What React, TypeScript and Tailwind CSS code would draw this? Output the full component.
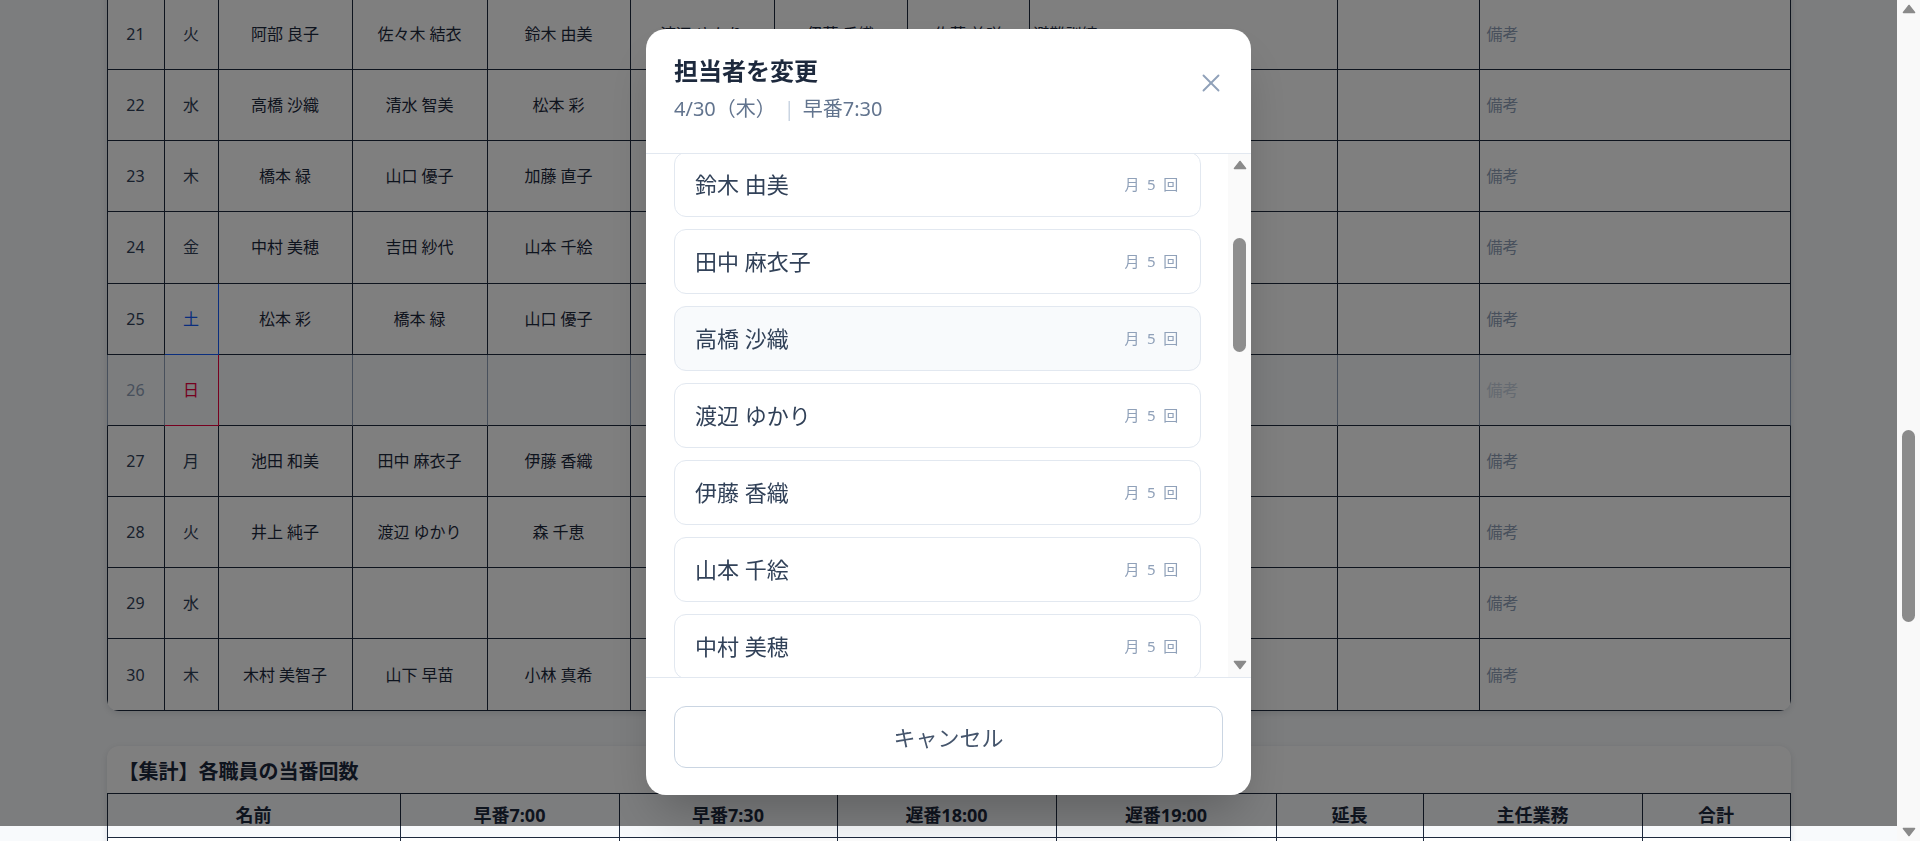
import React, { useLayoutEffect, useRef } from 'react';
import clsx from 'clsx';
import { X } from 'lucide-react';

const WEEK = ['日', '月', '火', '水', '木', '金', '土'];
const HOLIDAYS = [29];

const STAFF = [
  '佐藤 美咲', '阿部 良子', '佐々木 結衣', '清水 智美', '鈴木 由美', '田中 麻衣子', '高橋 沙織',
  '渡辺 ゆかり', '伊藤 香織', '山本 千絵', '中村 美穂', '小林 真希', '加藤 直子', '吉田 紗代',
  '山口 優子', '松本 彩', '井上 純子', '木村 美智子', '橋本 緑', '池田 和美', '山下 早苗',
  '森 千恵', '斎藤 由紀', '山田 恵', '岡田 舞', '石川 明日香', '前田 ひとみ', '藤田 知子',
];

const MONTH_COUNT = [4, 6, 5, 4, 5, 5, 5, 5, 5, 5, 5, 4, 5, 6, 4, 5, 5, 4, 6, 5, 4, 5, 4, 3, 4, 5, 4, 3];

const FIXED: Record<number, string[]> = {
  21: ['阿部 良子', '佐々木 結衣', '鈴木 由美', '渡辺 ゆかり', '伊藤 香織', '佐藤 美咲'],
  22: ['高橋 沙織', '清水 智美', '松本 彩', '山本 千絵', '加藤 直子', '中村 美穂'],
  23: ['橋本 緑', '山口 優子', '加藤 直子', '田中 麻衣子', '森 千恵', '佐藤 美咲'],
  24: ['中村 美穂', '吉田 紗代', '山本 千絵', '井上 純子', '小林 真希', '阿部 良子'],
  25: ['松本 彩', '橋本 緑', '山口 優子', '', '', ''],
  27: ['池田 和美', '田中 麻衣子', '伊藤 香織', '木村 美智子', '清水 智美', '佐藤 美咲'],
  28: ['井上 純子', '渡辺 ゆかり', '森 千恵', '高橋 沙織', '吉田 紗代', '阿部 良子'],
  30: ['木村 美智子', '山下 早苗', '小林 真希', '鈴木 由美', '池田 和美', '佐藤 美咲'],
};

type DayRow = { day: number; week: string; shifts: string[]; event: string };

const DAYS: DayRow[] = Array.from({ length: 30 }, (_, i) => {
  const day = i + 1;
  const week = WEEK[(day + 2) % 7];
  const off = week === '日' || HOLIDAYS.includes(day);
  const shifts = off
    ? ['', '', '', '', '', '']
    : FIXED[day] ?? Array.from({ length: 6 }, (_, c) => STAFF[(day * 5 + c * 7) % STAFF.length]);
  return { day, week, shifts, event: day === 21 ? '避難訓練' : day === 10 ? '職員会議' : '' };
});

const MAIN_HEAD = ['日付', '曜日', '早番7:00', '早番7:30', '遅番18:00', '遅番19:00', '延長', '主任業務', '行事・予定', '確認', '備考'];
const SUM_HEAD = ['名前', '早番7:00', '早番7:30', '遅番18:00', '遅番19:00', '延長', '主任業務', '合計'];

const SUMMARY = STAFF.map((name) => {
  const counts = [0, 1, 2, 3, 4, 5].map((c) => DAYS.filter((d) => d.shifts[c] === name).length);
  return { name, counts, total: counts.reduce((a, b) => a + b, 0) };
});

const Arrow = ({ down }: { down?: boolean }) => (
  <svg width="14" height="10" viewBox="0 0 14 10" className={down ? 'rotate-180' : undefined}>
    <path d="M7 1.5 12.5 8.5H1.5Z" fill="#8a8a8a" stroke="#8a8a8a" strokeWidth="1.6" strokeLinejoin="round" />
  </svg>
);

export default function App() {
  const pageRef = useRef<HTMLDivElement>(null);
  const anchorRowRef = useRef<HTMLTableRowElement>(null);
  const listRef = useRef<HTMLDivElement>(null);
  const anchorItemRef = useRef<HTMLLIElement>(null);

  // open on the last third of the month with the staff list near 鈴木
  useLayoutEffect(() => {
    const page = pageRef.current;
    const row = anchorRowRef.current;
    if (page && row) {
      page.scrollTop += row.getBoundingClientRect().top - page.getBoundingClientRect().top + 1;
    }
    const list = listRef.current;
    const item = anchorItemRef.current;
    if (list && item) {
      list.scrollTop += item.getBoundingClientRect().top - list.getBoundingClientRect().top + 2;
    }
  }, []);

  return (
    <div className="flex h-screen bg-slate-50 font-['Noto_Sans','Noto_Sans_CJK_JP',sans-serif] text-slate-800">
      <div ref={pageRef} className="h-full flex-1 overflow-y-scroll [scrollbar-width:none]">
        <div className="mx-auto flex w-[1684px] flex-col gap-[35px] pt-8 pb-10">
          <header className="flex h-[96px] items-center justify-between">
            <div>
              <h1 className="text-3xl font-bold leading-10">2026年4月 当番表</h1>
              <p className="mt-2 text-base text-slate-500">早番・遅番・延長・主任業務の担当者を管理します</p>
            </div>
            <div className="flex gap-3">
              <button className="rounded-lg border border-slate-300 bg-white px-5 py-2.5 text-base">前月</button>
              <button className="rounded-lg border border-slate-300 bg-white px-5 py-2.5 text-base">翌月</button>
              <button className="rounded-lg bg-slate-800 px-5 py-2.5 text-base text-white">印刷</button>
            </div>
          </header>

          <div className="flex h-[72px] items-center rounded-xl border border-slate-200 bg-white px-6 text-base text-slate-600">
            担当者の欄をクリックすると担当者を変更できます。日曜・祝日は当番なしです。
          </div>

          <section className="overflow-hidden rounded-xl bg-white shadow-[0_2px_6px_rgba(15,23,42,0.12)]">
            <div className="flex h-[70px] items-center justify-between px-6">
              <h2 className="text-lg font-bold">4月 当番表</h2>
              <div className="flex gap-5 text-sm text-slate-500">
                <span className="text-blue-600">土曜</span>
                <span className="text-rose-600">日曜・祝日</span>
              </div>
            </div>
            <table className="w-full table-fixed border-separate border-spacing-0 text-base">
              <colgroup>
                <col className="w-[58px]" />
                <col className="w-[54px]" />
                <col className="w-[134px]" />
                <col className="w-[135px]" />
                <col className="w-[143px]" />
                <col className="w-[144px]" />
                <col className="w-[133px]" />
                <col className="w-[122px]" />
                <col className="w-[308px]" />
                <col className="w-[142px]" />
                <col className="w-[311px]" />
              </colgroup>
              <thead>
                <tr>
                  {MAIN_HEAD.map((h, i) => (
                    <th
                      key={h}
                      className={clsx(
                        'h-[46px] border-y border-r border-slate-800 bg-slate-50 text-[15px] font-bold',
                        i === 0 && 'border-l',
                      )}
                    >
                      {h}
                    </th>
                  ))}
                </tr>
              </thead>
              <tbody>
                {DAYS.map((r) => {
                  const sun = r.week === '日';
                  const sat = r.week === '土';
                  const cell = clsx(
                    'h-[71.2px] border-b border-r border-b-slate-800',
                    sun ? 'border-r-slate-400' : 'border-r-slate-800',
                  );
                  return (
                    <tr
                      key={r.day}
                      ref={r.day === 21 ? anchorRowRef : undefined}
                      className={sun ? 'bg-slate-50' : 'bg-white'}
                    >
                      <td
                        className={clsx(
                          cell,
                          'border-l text-center',
                          sun ? 'border-l-slate-400 text-slate-400' : 'border-l-slate-800 text-slate-700',
                        )}
                      >
                        {r.day}
                      </td>
                      <td
                        className={clsx(
                          'h-[71.2px] border-b border-r text-center',
                          sat && 'border-blue-600 text-blue-600',
                          sun && 'border-rose-600 text-rose-600',
                          !sat && !sun && 'border-slate-800 text-slate-700',
                        )}
                      >
                        {r.week}
                      </td>
                      {r.shifts.map((n, i) => (
                        <td key={i} className={clsx(cell, 'text-center')}>
                          {n}
                        </td>
                      ))}
                      <td className={clsx(cell, 'pl-1 text-left')}>{r.event}</td>
                      <td className={cell} />
                      <td className={clsx(cell, 'pl-[7px] text-left', sun ? 'text-slate-300' : 'text-slate-400')}>
                        備考
                      </td>
                    </tr>
                  );
                })}
              </tbody>
            </table>
          </section>

          <section className="overflow-hidden rounded-xl bg-white shadow-[0_2px_6px_rgba(15,23,42,0.12)]">
            <h2 className="px-3 pt-3 pb-[7px] text-[20px] font-bold leading-7">【集計】各職員の当番回数</h2>
            <table className="w-full table-fixed border-separate border-spacing-0">
              <colgroup>
                <col className="w-[294px]" />
                <col className="w-[219px]" />
                <col className="w-[218px]" />
                <col className="w-[219px]" />
                <col className="w-[220px]" />
                <col className="w-[147px]" />
                <col className="w-[219px]" />
                <col className="w-[148px]" />
              </colgroup>
              <thead>
                <tr>
                  {SUM_HEAD.map((h, i) => (
                    <th
                      key={h}
                      className={clsx(
                        'h-[45px] border-y border-r border-slate-800 bg-slate-50 text-[18px] font-bold',
                        i === 0 && 'border-l',
                      )}
                    >
                      {h}
                    </th>
                  ))}
                </tr>
              </thead>
              <tbody>
                {SUMMARY.map((s) => (
                  <tr key={s.name}>
                    <td className="h-[30px] border-x border-b border-slate-800 text-center text-[15px]">{s.name}</td>
                    {s.counts.map((c, i) => (
                      <td key={i} className="h-[30px] border-r border-b border-slate-800 text-center text-[15px]">
                        {c}
                      </td>
                    ))}
                    <td className="h-[30px] border-r border-b border-slate-800 text-center text-[15px] font-bold">
                      {s.total}
                    </td>
                  </tr>
                ))}
              </tbody>
            </table>
          </section>
        </div>
      </div>

      {/* window scrollbar */}
      <div className="flex w-[23px] flex-col bg-[#f9f9f9]">
        <div className="flex h-[18px] items-center justify-center">
          <Arrow />
        </div>
        <div className="flex-1">
          <div className="mx-auto mt-[412px] h-[192px] w-[13px] rounded-full bg-[#8b8b8b]" />
        </div>
        <div className="flex h-[18px] items-center justify-center">
          <Arrow down />
        </div>
      </div>

      {/* assignee picker */}
      <div className="fixed left-0 right-[23px] top-0 flex h-[826px] items-center justify-center bg-black/50">
        <div className="mb-[3px] flex w-[605px] flex-col overflow-hidden rounded-[20px] bg-white shadow-2xl">
          <div className="flex items-start justify-between border-b border-slate-200 px-7 pt-[26px] pb-[30px]">
            <div>
              <h2 className="text-[24px] font-bold leading-8 text-slate-800">担当者を変更</h2>
              <p className="mt-2 text-xl leading-7 text-slate-500">
                4/30（木）<span className="mx-2 text-slate-300">|</span>早番7:30
              </p>
            </div>
            <button className="-mr-[3px] mt-[13px] text-slate-400">
              <X size={30} strokeWidth={1.5} />
            </button>
          </div>

          <div className="flex h-[523px]">
            <div ref={listRef} className="flex-1 overflow-y-scroll [scrollbar-width:none]">
              <ul className="flex flex-col gap-3 py-4 pl-7 pr-[27px]">
                {STAFF.map((name, i) => (
                  <li
                    key={name}
                    ref={name === '鈴木 由美' ? anchorItemRef : undefined}
                    className={clsx(
                      'flex items-center justify-between rounded-xl border border-slate-200 px-5 py-4',
                      name === '高橋 沙織' ? 'bg-slate-50' : 'bg-white',
                    )}
                  >
                    <span className="text-[22px] leading-[31px] text-slate-700">{name}</span>
                    <span className="text-[15px] tracking-[0.12em] text-slate-400">月 {MONTH_COUNT[i]} 回</span>
                  </li>
                ))}
              </ul>
            </div>
            <div className="flex w-[23px] flex-col bg-[#fafafa]">
              <div className="flex h-[23px] items-center justify-center">
                <Arrow />
              </div>
              <div className="flex-1">
                <div className="mx-auto mt-[61px] h-[114px] w-[13px] rounded-full bg-[#8e8e8e]" />
              </div>
              <div className="flex h-[23px] items-center justify-center">
                <Arrow down />
              </div>
            </div>
          </div>

          <div className="border-t border-slate-200 px-7 pt-7 pb-[27px]">
            <button className="w-full rounded-xl border border-slate-300 py-[15px] text-[22px] leading-[30px] text-slate-600">
              キャンセル
            </button>
          </div>
        </div>
      </div>
    </div>
  );
}
